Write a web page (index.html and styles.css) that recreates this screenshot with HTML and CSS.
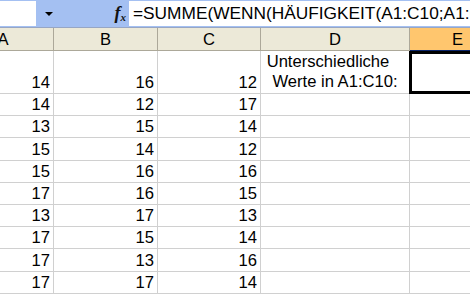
FILE: index.html
```
<!DOCTYPE html>
<html lang="de">
<head>
    <meta charset="UTF-8">
    <meta name="viewport" content="width=device-width, initial-scale=1.0">
    <title>Unterschiedliche Werte</title>
    <link rel="stylesheet" href="styles.css">
</head>
<body>

<div class="formula-bar">
    <div class="name-box"></div>
    <div class="name-drop"><span class="arrow"></span></div>
    <div class="fx"><span class="fx-f">f</span><span class="fx-x">x</span></div>
    <div class="formula">=SUMME(WENN(HÄUFIGKEIT(A1:C10;A1:C10)&gt;0;1))</div>
</div>
<div class="sheet">
    <div class="grid" id="grid">
        <div class="col-head">A</div>
        <div class="col-head">B</div>
        <div class="col-head">C</div>
        <div class="col-head">D</div>
        <div class="col-head active">E</div>
    </div>
</div>
<script>
    let values = [
        [14, 16, 12],
        [14, 12, 17],
        [13, 15, 14],
        [15, 14, 12],
        [15, 16, 16],
        [17, 16, 15],
        [13, 17, 13],
        [17, 15, 14],
        [17, 13, 16],
        [17, 17, 14]
    ];
    function renderRows() {
        let grid = document.getElementById("grid");
        values.forEach((row, index) => {
            let html = row.map(v => `<div class="cell num">${v}</div>`).join("");
            if (index === 0) {
                html += `<div class="cell label"><span class="first">Unterschiedliche</span><span>Werte in A1:C10:</span></div>`;
                html += `<div class="cell selected"></div>`;
            } else {
                html += `<div class="cell"></div><div class="cell"></div>`;
            }
            grid.innerHTML += html;
        });
    }
    renderRows();
</script>

</body>
</html>
```

FILE: styles.css
```
body {
    margin: 0;
    font-family: "Liberation Sans", Arial, sans-serif;
    font-size: 16.6px;
    background: #fff;
    overflow: hidden;
}
.formula-bar {
    display: flex;
    box-sizing: border-box;
    height: 28px;
    padding: 1px 0;
    background: #a4c0f2;
    border-bottom: 1px solid #97a6c4;
}
.name-box {
    width: 36px;
    background: #fff;
}
.name-drop {
    width: 24px;
    display: flex;
    align-items: center;
    justify-content: center;
}
.arrow {
    width: 0;
    height: 0;
    border-left: 4px solid transparent;
    border-right: 4px solid transparent;
    border-top: 4px solid #000;
    margin-left: 1px;
}
.fx {
    margin-left: auto;
    display: flex;
    align-items: center;
    padding-right: 3px;
    font-family: "Liberation Serif", serif;
    font-style: italic;
    font-weight: bold;
    color: #111;
}
.fx-f {
    font-size: 18px;
}
.fx-x {
    font-size: 11px;
    margin-top: 7px;
}
.formula {
    flex: 0 0 337px;
    background: #fff;
    white-space: nowrap;
    overflow: hidden;
    padding-left: 4px;
    font-size: 17.3px;
    line-height: 25px;
    color: #000;
}
.sheet {
    overflow: hidden;
}
.grid {
    display: grid;
    grid-template-columns: 101px 104px 103px 149px 96px;
    grid-template-rows: 23px 43px repeat(9, 22.2px);
    margin-left: -47px;
    width: 553px;
}
.col-head {
    box-sizing: border-box;
    background: #ece9d8;
    border-right: 1px solid #aca899;
    border-bottom: 1px solid #aca899;
    text-align: center;
    line-height: 24px;
    color: #000;
}
.col-head.active {
    background: #ffc66e;
    border-bottom-color: #0a246a;
}
.cell {
    box-sizing: border-box;
    border-right: 1px solid #d0d0d0;
    border-bottom: 1px solid #d0d0d0;
    line-height: 19px;
}
.num {
    display: flex;
    align-items: flex-end;
    justify-content: flex-end;
    padding-right: 3px;
    padding-bottom: 1px;
}
.label {
    display: flex;
    flex-direction: column;
    align-items: center;
    justify-content: flex-end;
    line-height: 20px;
    padding-bottom: 1px;
}
.label .first {
    padding-right: 14px;
}
.selected {
    position: relative;
}
.selected::after {
    content: "";
    position: absolute;
    top: 0;
    left: -1px;
    right: -3px;
    bottom: -1px;
    border: 3px solid #000;
}
```
